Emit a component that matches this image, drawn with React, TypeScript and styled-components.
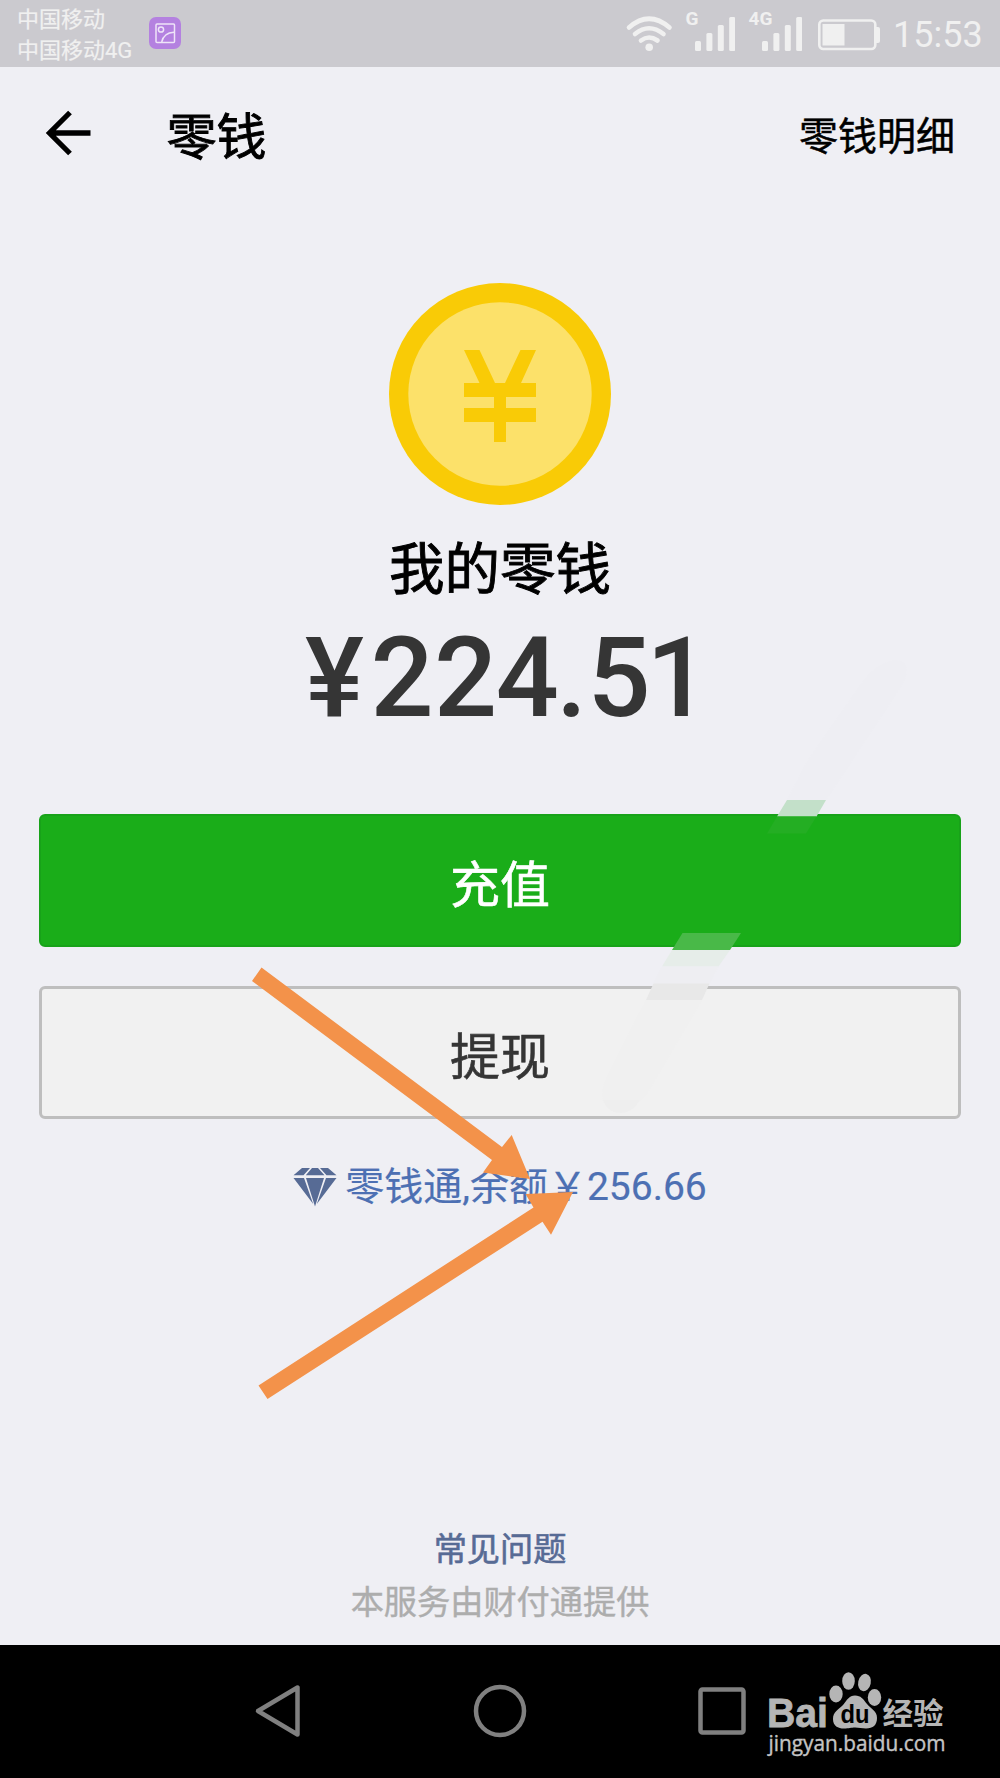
import React from "react";
import styled, { createGlobalStyle } from "styled-components";

const GlobalStyle = createGlobalStyle`
  * { box-sizing: border-box; }
  body {
    margin: 0;
    background: #efeff4;
    font-family: Roboto, "Noto Sans CJK SC", sans-serif;
  }
  button { font-family: inherit; }
  svg { display: block; }
`;

const Screen = styled.div`
  position: relative;
  width: 1000px;
  height: 1778px;
  display: flex;
  flex-direction: column;
  background: #efeff4;
  overflow: hidden;
`;

const StatusBar = styled.header`
  height: 66.5px;
  flex: none;
  display: flex;
  justify-content: space-between;
  padding: 0 18px 0 17px;
  background: #cbcacf;
  color: #f0f0f0;
`;

const StatusLeft = styled.div`
  display: flex;
  align-items: center;
`;

const Carriers = styled.div`
  width: 132px;
  font-size: 22px;
  line-height: 31px;
  padding-top: 4px;
  -webkit-text-stroke: 0.2px;
`;

const StatusRight = styled.div`
  display: flex;
  align-items: center;
`;

const Clock = styled.time`
  width: 89px;
  margin-left: 12px;
  padding-top: 3px;
  font-size: 36px;
  line-height: 40px;
  white-space: nowrap;
`;

const Toolbar = styled.nav`
  height: 133.5px;
  flex: none;
  display: flex;
  align-items: center;
  padding: 0 45px 0 44.5px;
  color: #000;
`;

const Title = styled.h1`
  margin: 0 auto 0 76px;
  padding-top: 9px;
  font-size: 50px;
  line-height: 60px;
  font-weight: 400;
  -webkit-text-stroke: 0.9px;
`;

const DetailLink = styled.a`
  padding-top: 7px;
  font-size: 39px;
  line-height: 60px;
  -webkit-text-stroke: 0.5px;
`;

const Content = styled.main`
  flex: 1;
  display: flex;
  flex-direction: column;
  align-items: center;
  padding: 83px 39px 0;
`;

const BalanceLabel = styled.h2`
  margin: 31px 0 0;
  font-size: 55.5px;
  line-height: 70px;
  font-weight: 400;
  color: #000;
  -webkit-text-stroke: 0.9px;
`;

const Balance = styled.div`
  display: flex;
  width: 394px;
  margin-top: 17px;
  font-size: 111px;
  line-height: 110px;
  font-weight: 500;
  color: #353535;
  letter-spacing: 0.5px;
`;

const Digits = styled.span<{ $shift?: number }>`
  margin-left: ${(p) => p.$shift ?? 0}px;
`;

const Actions = styled.div`
  width: 100%;
  display: grid;
  gap: 39px;
  margin-top: 81px;
`;

const ActionButton = styled.button<{ $primary?: boolean }>`
  height: 133px;
  padding: 10px 0 0;
  border-radius: 6px;
  border: ${(p) => (p.$primary ? "2px solid #18a219" : "3px solid #bebebe")};
  background: ${(p) => (p.$primary ? "#1aad19" : "#f1f1f1")};
  color: ${(p) => (p.$primary ? "#fff" : "#353535")};
  font-size: 50px;
  line-height: 70px;
  -webkit-text-stroke: 0.6px;
`;

const FundLink = styled.a`
  display: flex;
  align-items: center;
  gap: 8px;
  margin-top: 40px;
  color: #4d70b3;
  font-size: 39px;
  line-height: 56px;
  white-space: nowrap;
  -webkit-text-stroke: 0.2px;
`;

const Footer = styled.footer`
  height: 122px;
  flex: none;
  display: flex;
  flex-direction: column;
  align-items: center;
  font-size: 33.2px;
  line-height: 53.5px;
`;

const FaqLink = styled.a`
  color: #576b95;
  -webkit-text-stroke: 0.6px;
`;

const Provider = styled.span`
  color: #adadad;
  -webkit-text-stroke: 0.4px;
`;

const NavigationBar = styled.div`
  height: 133.5px;
  flex: none;
  display: flex;
  align-items: center;
  padding-left: 253px;
  background: #000;
`;

const NavIcon = styled.svg<{ $gap: number }>`
  flex: none;
  margin-right: ${(p) => p.$gap}px;
`;

const Logo = styled.svg`
  flex: none;
  overflow: visible;
  margin-top: 13px;
`;

const Spacer = styled.div<{ $w: number }>`
  width: ${(p) => p.$w}px;
`;

const Overlay = styled.svg`
  position: absolute;
  inset: 0;
  pointer-events: none;
`;

const SIGNAL_BARS = [10, 18, 26, 34];

function Signal({ label }: { label: string }) {
  const wide = label.length > 1;
  const x = wide ? 14 : 10;
  return (
    <svg width={wide ? 54 : 50} height="66" fill="#f0f0f0">
      <text x="0.5" y="25" fontSize="19" fontWeight="700" fontFamily="Roboto, sans-serif">
        {label}
      </text>
      {SIGNAL_BARS.map((h, i) => (
        <rect key={h} x={x + i * 11.4} y={51 - h} width="6" height={h} rx="1.5" />
      ))}
    </svg>
  );
}

function PictureIcon() {
  return (
    <svg width="32" height="32" fill="none" stroke="#eee4f8" strokeWidth="1.5">
      <rect width="32" height="32" rx="7" fill="#b481e0" stroke="none" />
      <rect x="7" y="7" width="18.5" height="18.5" rx="1" />
      <circle cx="12" cy="12.5" r="2.6" />
      <path d="M12.7 25C14 19 18.5 15.5 25 15.2" />
    </svg>
  );
}

function WifiIcon() {
  return (
    <svg width="48" height="66" fill="none" stroke="#f0f0f0" strokeWidth="4.6" strokeLinecap="round">
      <path d="M4 27.500Q24 10 44.500 27.500" />
      <path d="M10 34Q24 22.500 38.500 34" />
      <path d="M16 40.500Q24 34.500 32.500 40.500" />
      <circle cx="24.200" cy="47.300" r="3.800" fill="#f0f0f0" stroke="none" />
    </svg>
  );
}

function BatteryIcon() {
  return (
    <svg width="64" height="66" fill="#f0f0f0">
      <rect x="2.300" y="20.500" width="56" height="28.500" rx="4" fill="none" stroke="#f0f0f0" strokeWidth="2.600" />
      <rect x="5.500" y="24" width="22" height="21.500" />
      <path d="M59 27h2q2 0 2 2v12q0 2-2 2h-2z" />
    </svg>
  );
}

function BackArrow() {
  return (
    <svg width="46" height="46" fill="none" stroke="#000" strokeWidth="5.3">
      <path d="M45.500 23H4M25 2.500L4.500 23L25 43.500" />
    </svg>
  );
}

function Coin() {
  return (
    <svg width="222" height="222" viewBox="0 0 222 222">
      <circle cx="111" cy="111" r="111" fill="#f9cb06" />
      <circle cx="111" cy="111" r="91.700" fill="#fce16a" />
      <path
        fill="#f9cb06"
        d="M75 67H90.500L106 100H116L131.500 67H147L132 100H147V114H117V125H147V139H117V159H105V139H75V125H105V114H75V100H90.500Z"
      />
    </svg>
  );
}

function Diamond() {
  return (
    <svg width="44" height="40" viewBox="0 0 44 40" fill="#576b95">
      <path d="M9 1H17L10.500 8.300H.5ZM19 1H25L31.500 8.300H12.800ZM27 1H35L43.500 8.300H33.500Z" />
      <path d="M.5 11H11L20.200 37ZM13 11H31L22 39.500ZM33 11H43.500L23.800 37Z" />
    </svg>
  );
}

function BaiduLogo() {
  return (
    <Logo width="190" height="100" fill="#b5b5b5" fontFamily="'Liberation Sans', 'Noto Sans CJK SC', sans-serif" fontWeight="700">
      <text x="6" y="58.500" fontSize="41" textLength="61" lengthAdjust="spacingAndGlyphs" stroke="#b5b5b5" strokeWidth=".8">
        Bai
      </text>
      <ellipse cx="75" cy="26" rx="6.700" ry="8.500" />
      <ellipse cx="87.500" cy="13" rx="6.300" ry="8.800" />
      <ellipse cx="103.500" cy="14.500" rx="6.300" ry="8.800" transform="rotate(12 103.500 14.500)" />
      <ellipse cx="113.500" cy="29.500" rx="6.700" ry="8.500" />
      <path d="M94 27.500C88 27.500 86 32 82 37C77 42 72 44 72 51C72 58 77 60.500 83 60.500C88 60.500 90 59.500 94 59.500C98 59.500 101 60.500 105 60.500C112 60.500 116 57 116 50C116 43 110 41 106 36C102 31 100 27.500 94 27.500Z" />
      <text x="79.500" y="55" fontSize="26" fill="#000" textLength="29" lengthAdjust="spacingAndGlyphs">
        du
      </text>
      <text x="121.500" y="56" fontSize="30" textLength="61" lengthAdjust="spacingAndGlyphs">
        经验
      </text>
      <text x="7.500" y="82.500" fontSize="22" fontWeight="500" fill="#c4c4c4" stroke="#c4c4c4" strokeWidth=".4" fontFamily="'Open Sans', sans-serif" textLength="177" lengthAdjust="spacingAndGlyphs">
        jingyan.baidu.com
      </text>
    </Logo>
  );
}

function Annotations() {
  return (
    <Overlay width="1000" height="1778">
      <path fill="#eeeef3" d="M787 800L826 800L902 685Q914 662 895 660Q878 662 862 683L808 760Z" />
      <path fill="#c3e0c9" d="M787 800H826L816.500 816.500H777Z" />
      <path fill="#24ae23" d="M777 816.500H816.500L806 833.500H767Z" />
      <path fill="#49b948" d="M682.500 933H741L730 950H672Z" />
      <path fill="#e6ede9" d="M672 950H730L718.500 966.500H662Z" />
      <path fill="#eeeef2" d="M662 966.500H718.500L709.500 983.500H653.500Z" />
      <path fill="#e8e8e8" d="M653.500 983.500H709.500L702 1000H646Z" />
      <path fill="#f0f0f0" d="M646 1000H702L648 1092L640 1101H603Q601 1090 606 1079Z" />
      <path fill="#eeeeee" d="M603 1100H640Q632 1113 621 1113Q608 1113 603 1100Z" />
      <g fill="#f3924a">
        <path d="M252 981L261.500 967.500L502 1147L511.700 1135L530 1179L483 1172.500L492 1160Z" />
        <path d="M258.500 1385.500L267.500 1399L542.500 1221.700L551 1234.700L573 1192L525.500 1194L533.500 1207.500Z" />
      </g>
    </Overlay>
  );
}

export default function App() {
  return (
    <Screen>
      <GlobalStyle />
      <StatusBar>
        <StatusLeft>
          <Carriers>
            <div>中国移动</div>
            <div>中国移动4G</div>
          </Carriers>
          <PictureIcon />
        </StatusLeft>
        <StatusRight>
          <WifiIcon />
          <Spacer $w={12} />
          <Signal label="G" />
          <Spacer $w={13} />
          <Signal label="4G" />
          <Spacer $w={15} />
          <BatteryIcon />
          <Clock>15:53</Clock>
        </StatusRight>
      </StatusBar>
      <Toolbar>
        <BackArrow />
        <Title>零钱</Title>
        <DetailLink>零钱明细</DetailLink>
      </Toolbar>
      <Content>
        <Coin />
        <BalanceLabel>我的零钱</BalanceLabel>
        <Balance>
          <Digits $shift={2}>¥</Digits>
          <Digits $shift={6}>22</Digits>
          <Digits $shift={-2}>4</Digits>
          <Digits $shift={-3}>.5</Digits>
          <Digits $shift={-5}>1</Digits>
        </Balance>
        <Actions>
          <ActionButton $primary>充值</ActionButton>
          <ActionButton>提现</ActionButton>
        </Actions>
        <FundLink>
          <Diamond />
          <span>零钱通,余额￥256.66</span>
        </FundLink>
      </Content>
      <Footer>
        <FaqLink>常见问题</FaqLink>
        <Provider>本服务由财付通提供</Provider>
      </Footer>
      <NavigationBar>
        <NavIcon $gap={172} width="48" height="56" fill="none" stroke="#808080" strokeWidth="4.500" strokeLinejoin="round">
          <path d="M5 28L44.500 4.500V51.500Z" />
        </NavIcon>
        <NavIcon $gap={171} width="54" height="54" fill="none" stroke="#808080" strokeWidth="4.500">
          <circle cx="27" cy="27" r="24" />
        </NavIcon>
        <NavIcon $gap={15} width="48" height="48" fill="none" stroke="#808080" strokeWidth="4.500">
          <rect x="2.500" y="2.500" width="43" height="43" rx="2" />
        </NavIcon>
        <BaiduLogo />
      </NavigationBar>
      <Annotations />
    </Screen>
  );
}
